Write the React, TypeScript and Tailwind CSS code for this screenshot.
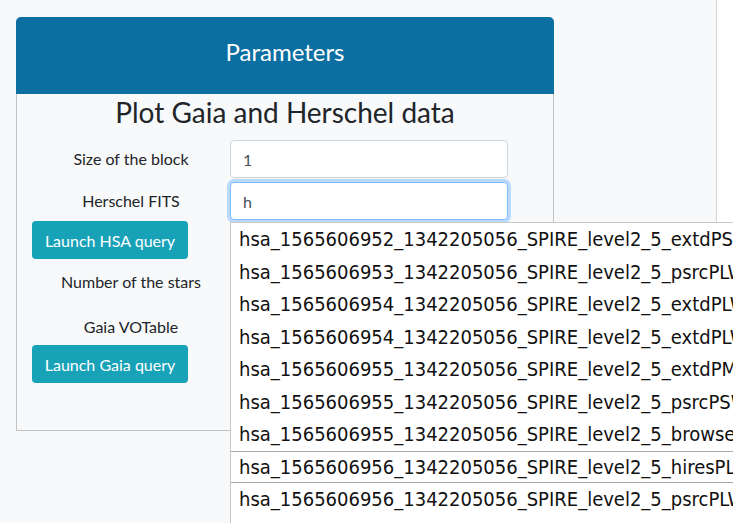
const items = [
  "hsa_1565606952_1342205056_SPIRE_level2_5_extdPSW",
  "hsa_1565606953_1342205056_SPIRE_level2_5_psrcPLW",
  "hsa_1565606954_1342205056_SPIRE_level2_5_extdPLW",
  "hsa_1565606954_1342205056_SPIRE_level2_5_extdPLW",
  "hsa_1565606955_1342205056_SPIRE_level2_5_extdPMW",
  "hsa_1565606955_1342205056_SPIRE_level2_5_psrcPSW",
  "hsa_1565606955_1342205056_SPIRE_level2_5_browse",
  "hsa_1565606956_1342205056_SPIRE_level2_5_hiresPLW",
  "hsa_1565606956_1342205056_SPIRE_level2_5_psrcPLW",
  "hsa_1565606956_1342205056_SPIRE_level2_5_psrcPMW",
];

const font = { fontFamily: "Lato, 'Noto Sans', sans-serif" };

function Row({ label, value, focused }: { label: string; value?: string; focused?: boolean }) {
  return (
    <div className="flex items-center h-[38px]">
      <div className="w-[198px] text-center text-[16px] text-[#212529]">{label}</div>
      <input
        readOnly
        value={value ?? ""}
        className={
          focused
            ? "w-[278px] h-[38px] px-3 rounded-[4px] bg-white text-[16px] text-[#495057] border border-[#80bdff] outline-none shadow-[0_0_0_3px_rgba(0,123,255,0.25)]"
            : "w-[278px] h-[38px] px-3 rounded-[4px] bg-white text-[16px] text-[#495057] border border-[#ced4da] outline-none"
        }
        style={font}
      />
    </div>
  );
}

function QueryButton({ children }: { children: string }) {
  return (
    <button className="w-[156px] h-[38px] pt-px rounded-[4px] bg-[#17a2b8] text-white text-[16px]" style={font}>
      {children}
    </button>
  );
}

export default function App() {
  return (
    <div className="flex h-[523px] overflow-hidden bg-white" style={font}>
      <div className="relative w-[717px] shrink-0 overflow-hidden bg-[#f8f9fa] border-r border-[#d6d6d6] pt-[17px] pl-[16px]">
        {/* card */}
        <div className="w-[538px] border border-[#c2c2c2] rounded-t-[5px] bg-[#f8f9fa]">
          <div className="h-[77px] -m-px mb-0 pb-[7px] rounded-t-[5px] bg-[#0c6fa2] flex items-center justify-center text-white text-[24px]">
            Parameters
          </div>
          <div className="px-[15px] pb-[47px]">
            <h3 className="text-[28px] leading-[34px] text-center text-[#212529] mt-px">
              Plot Gaia and Herschel data
            </h3>
            <div className="mt-[11px] flex flex-col">
              <Row label="Size of the block" value="1" />
              <div className="mt-[4px]">
                <Row label="Herschel FITS" value="h" focused />
              </div>
              <div className="mt-px">
                <QueryButton>Launch HSA query</QueryButton>
              </div>
              <div className="mt-[4px]">
                <Row label="Number of the stars" />
              </div>
              <div className="mt-[7px]">
                <Row label="Gaia VOTable" />
              </div>
              <div className="-mt-px">
                <QueryButton>Launch Gaia query</QueryButton>
              </div>
            </div>
          </div>
        </div>
      </div>
      <div className="flex-1 bg-white" />

      {/* datalist dropdown, overlays the page and is cut at the window edge */}
      <div
        className="fixed left-[230px] top-[222px] w-[503px] h-[320px] overflow-hidden bg-white border-l border-t border-[#c9c9c9] text-[#111]"
        style={{ fontFamily: "'DejaVu Sans Condensed', 'DejaVu Sans', sans-serif", fontStretch: "condensed" }}
      >
        {items.map((it, i) => (
          <div
            key={i}
            className={
              i === 7
                ? "h-[32.5px] flex items-center pl-[8px] text-[20px] whitespace-nowrap border-y border-[#a8a8a8] -ml-px border-l"
                : "h-[32.5px] flex items-center pl-[8px] text-[20px] whitespace-nowrap"
            }
          >
            {it}
          </div>
        ))}
      </div>
    </div>
  );
}
